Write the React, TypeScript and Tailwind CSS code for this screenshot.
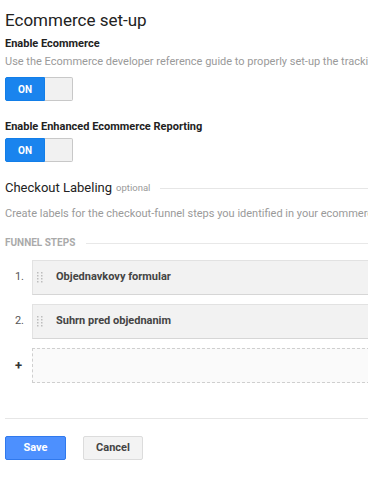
import React from 'react'

function Toggle() {
  return (
    <div className="flex h-[24px] w-[68px]">
      <div className="flex w-[40px] items-center justify-center rounded-l-[2px] border border-[#127ee8] bg-[#1a84ee] text-[10px] font-bold text-white">
        ON
      </div>
      <div className="w-[28px] rounded-r-[2px] border border-l-0 border-[#c8c8c8] bg-[#f1f1f1]" />
    </div>
  )
}

function DragHandle() {
  const dots = []
  for (let r = 0; r < 4; r++) {
    for (let c = 0; c < 2; c++) {
      dots.push(<rect key={`${r}-${c}`} x={c * 4} y={r * 3} width="1.5" height="1.5" fill="#bdbdbd" />)
    }
  }
  return (
    <svg width="6" height="11" viewBox="0 0 6 11" className="shrink-0">
      {dots}
    </svg>
  )
}

function StepRow({ n, label }: { n: number; label: string }) {
  return (
    <div className="flex h-[35px] items-center">
      <div className="w-[27px] pr-[8px] text-right text-[11px] text-[#555]">{n}.</div>
      <div className="flex h-full flex-1 items-center border border-[#e2e2e2] border-b-[#d6d6d6] bg-[#f2f2f2] pl-[4px]">
        <DragHandle />
        <span className="ml-[13px] text-[11px] font-bold text-[#444]">{label}</span>
      </div>
    </div>
  )
}

export default function App() {
  const steps = ['Objednavkovy formular', 'Suhrn pred objednanim']

  return (
    <div className="h-[496px] w-[368px] overflow-hidden bg-white font-['Roboto',sans-serif]">
      <div className="w-[640px] pl-[5px] pt-[8px]">
        <h1 className="text-[17px] leading-[24px] font-normal text-[#222]">Ecommerce set-up</h1>

        <div className="mt-[4px] text-[11px] leading-[16px] font-bold text-[#222]">Enable Ecommerce</div>
        <div className="mt-[2px] whitespace-nowrap text-[11px] leading-[16px] text-[#9a9a9a]">
          Use the Ecommerce developer reference guide to properly set-up the tracking code on your site.
        </div>
        <div className="mt-[7px]">
          <Toggle />
        </div>

        <div className="mt-[18px] text-[11px] leading-[16px] font-bold text-[#222]">
          Enable Enhanced Ecommerce Reporting
        </div>
        <div className="mt-[3px]">
          <Toggle />
        </div>

        {/* Checkout labeling */}
        <div className="mt-[16px] flex h-[20px] items-center">
          <span className="text-[13px] leading-[20px] text-[#222]">Checkout Labeling</span>
          <span className="ml-[4px] text-[9.5px] text-[#999]">optional</span>
          <div className="ml-[10px] h-px flex-1 bg-[#e6e6e6]" />
        </div>
        <div className="mt-[8px] whitespace-nowrap text-[11px] leading-[16px] text-[#9a9a9a]">
          Create labels for the checkout-funnel steps you identified in your ecommerce tracking code.
        </div>

        <div className="mt-[14px] flex h-[14px] items-center">
          <span className="text-[10px] leading-[14px] font-bold text-[#aaa]">FUNNEL STEPS</span>
          <div className="ml-[11px] h-px flex-1 bg-[#e8e8e8]" />
        </div>

        <div className="mt-[10px] flex flex-col gap-[9px]">
          {steps.map((s, i) => (
            <StepRow key={s} n={i + 1} label={s} />
          ))}
          <div className="flex h-[35px] items-center">
            <div className="w-[27px] pr-[10px] text-right text-[13px] font-bold text-[#333]">+</div>
            <div className="h-full flex-1 border border-dashed border-[#cfcfcf] bg-[#fafafa]" />
          </div>
        </div>

        <div className="mt-[35px] h-px bg-[#e6e6e6]" />

        <div className="mt-[17px] flex gap-[17px]">
          <button className="h-[24px] w-[61px] rounded-[2px] border border-[#3079ed] bg-[#4d90fe] text-[11px] font-bold text-white">
            Save
          </button>
          <button className="h-[24px] w-[60px] rounded-[2px] border border-[#dcdcdc] bg-[#f3f3f3] text-[11px] font-bold text-[#444]">
            Cancel
          </button>
        </div>
      </div>
    </div>
  )
}
